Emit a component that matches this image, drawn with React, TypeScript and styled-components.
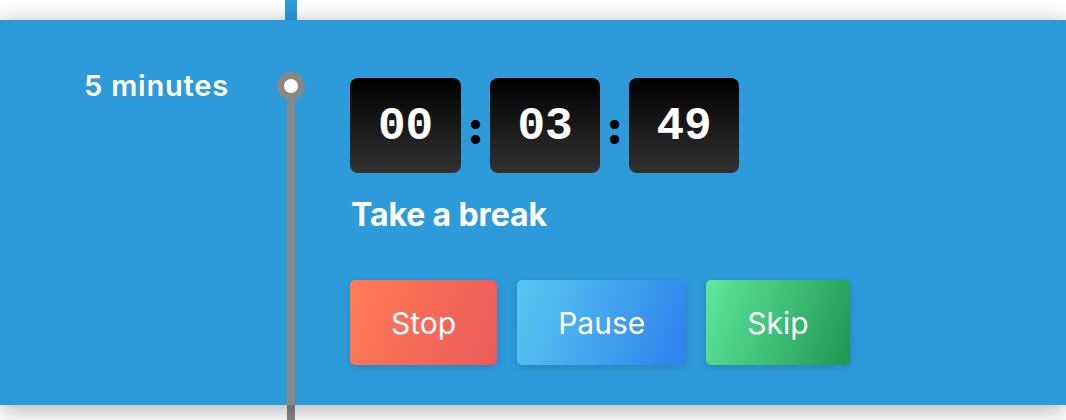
import React from "react";
import styled, { createGlobalStyle } from "styled-components";

const Global = createGlobalStyle`
  html, body { margin: 0; padding: 0; background: #ffffff; }
  body { font-family: Inter, "Noto Sans", "Liberation Sans", sans-serif; -webkit-font-smoothing: antialiased; }
  * { box-sizing: border-box; }
`;

const Page = styled.div`
  width: 1066px;
  height: 420px;
  overflow: hidden;
  display: flex;
  flex-direction: column;
  background: #ffffff;
`;

const Strip = styled.div<{ $h: number }>`
  height: ${(p) => p.$h}px;
  flex: none;
  display: flex;
  background: #ffffff;
`;

const StripLine = styled.div<{ $color: string; $w: number; $left: number }>`
  width: ${(p) => p.$w}px;
  margin-left: ${(p) => p.$left}px;
  background: ${(p) => p.$color};
`;

const Panel = styled.section`
  position: relative;
  z-index: 1;
  height: 385px;
  flex: none;
  display: flex;
  background: #2d9bda;
  box-shadow: 0 4px 22px rgba(0, 0, 0, 0.32);
`;

const Label = styled.div`
  width: 229px;
  padding-top: 48px;
  text-align: right;
  color: #ffffff;
  font-size: 29px;
  font-weight: 600;
  letter-spacing: 0.8px;
  white-space: nowrap;
`;

const Marker = styled.div`
  width: 28px;
  margin-left: 48px;
  padding-top: 52px;
  display: flex;
  flex-direction: column;
  align-items: center;
`;

const Dot = styled.div`
  width: 28px;
  height: 28px;
  flex: none;
  border-radius: 50%;
  border: 7.5px solid #878787;
  background: #ffffff;
`;

const Stem = styled.div`
  width: 8px;
  flex: 1;
  background: #878787;
`;

const Content = styled.div`
  margin-left: 45px;
  padding-top: 58px;
  display: flex;
  flex-direction: column;
  align-items: flex-start;
`;

const Clock = styled.div`
  display: flex;
  align-items: center;
`;

const Digits = styled.div<{ $w: number }>`
  width: ${(p) => p.$w}px;
  height: 95px;
  border-radius: 8px;
  background: linear-gradient(to bottom, #000000, #323232);
  color: #ffffff;
  display: flex;
  align-items: center;
  justify-content: center;
  font-family: "Liberation Mono", "DejaVu Sans Mono", monospace;
  font-weight: 700;
  font-size: 46px;
  padding-top: 2px;
`;

const Colon = styled.div`
  width: 29px;
  padding-top: 2px;
  text-align: center;
  color: #000000;
  font-family: Inter, "Liberation Sans", sans-serif;
  font-weight: 900;
  font-size: 46px;
  line-height: 1;
`;

const Title = styled.h2`
  margin: 23px 0 0 1px;
  color: #ffffff;
  font-size: 32px;
  font-weight: 700;
  letter-spacing: -0.1px;
  line-height: 38px;
`;

const Buttons = styled.div`
  margin-top: 46px;
  display: flex;
  gap: 20px;
`;

const gradients: Record<string, string> = {
  stop: "linear-gradient(110deg, #ff7c56 0%, #eb5a5a 100%)",
  pause: "linear-gradient(110deg, #56c9f1 0%, #2f80ec 100%)",
  skip: "linear-gradient(110deg, #5fe89b 0%, #1f9652 100%)",
};

const Button = styled.button<{ $kind: string }>`
  height: 85px;
  padding: 0 41px;
  border: none;
  border-radius: 5px;
  background: ${(p) => gradients[p.$kind]};
  color: #ffffff;
  font-family: Inter, "Liberation Sans", sans-serif;
  font-size: 30px;
  font-weight: 420;
  box-shadow: 0 2px 8px rgba(0, 0, 0, 0.16);
  cursor: pointer;
`;

export default function App() {
  return (
    <Page>
      <Global />
      <Strip $h={20}>
        <StripLine $color="#2d9bda" $w={12} $left={285} />
      </Strip>
      <Panel>
        <Label>5 minutes</Label>
        <Marker>
          <Dot />
          <Stem />
        </Marker>
        <Content>
          <Clock>
            <Digits $w={111}>00</Digits>
            <Colon>:</Colon>
            <Digits $w={110}>03</Digits>
            <Colon>:</Colon>
            <Digits $w={110}>49</Digits>
          </Clock>
          <Title>Take a break</Title>
          <Buttons>
            <Button $kind="stop">Stop</Button>
            <Button $kind="pause">Pause</Button>
            <Button $kind="skip">Skip</Button>
          </Buttons>
        </Content>
      </Panel>
      <Strip $h={15}>
        <StripLine $color="#878787" $w={8} $left={287} />
      </Strip>
    </Page>
  );
}
